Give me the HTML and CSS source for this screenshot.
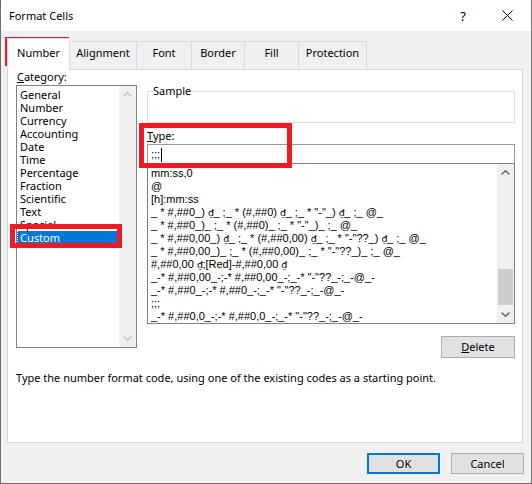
FILE: index.html
```html
<!DOCTYPE html>
<html>
<head>
<meta charset="utf-8">
<title>Format Cells</title>
<link rel="stylesheet" href="styles.css">
</head>
<body>
<div class="window">
  <div class="titlebar">
    <span class="title">Format Cells</span>
    <span class="help">?</span>
    <svg class="close" width="11" height="11" viewBox="0 0 11 11"><path d="M0.5 0.5L10.5 10.5M10.5 0.5L0.5 10.5" stroke="#000" stroke-width="1" fill="none"/></svg>
  </div>
  <div class="tabs">
    <div class="tab active t-number">Number</div>
    <div class="tab t-align">Alignment</div>
    <div class="tab t-font">Font</div>
    <div class="tab t-border">Border</div>
    <div class="tab t-fill">Fill</div>
    <div class="tab t-prot">Protection</div>
  </div>
  <div class="panel">
    <div class="content">
      <div class="leftcol">
        <div class="label cat-label"><u>C</u>ategory:</div>
        <div class="catlist">
          <ul class="cat-items">
            <li>General</li>
            <li>Number</li>
            <li>Currency</li>
            <li>Accounting</li>
            <li>Date</li>
            <li>Time</li>
            <li>Percentage</li>
            <li>Fraction</li>
            <li>Scientific</li>
            <li>Text</li>
            <li>Special</li>
            <li class="selected">Custom</li>
          </ul>
          <div class="vscroll disabled">
            <div class="sbtn"><svg width="9" height="5" viewBox="0 0 9 5"><path d="M0.5 4.5L4.5 0.7L8.5 4.5" stroke="currentColor" stroke-width="1.3" fill="none"/></svg></div>
            <div class="track"></div>
            <div class="sbtn"><svg width="9" height="5" viewBox="0 0 9 5"><path d="M0.5 0.5L4.5 4.3L8.5 0.5" stroke="currentColor" stroke-width="1.3" fill="none"/></svg></div>
          </div>
        </div>
      </div>
      <div class="rightcol">
        <div class="sample"><span class="legend">Sample</span></div>
        <div class="label type-label"><u>T</u>ype:</div>
        <div class="typeinput">;;;<span class="caret"></span></div>
        <div class="typelist">
          <ul class="codes">
            <li>mm:ss,0</li>
            <li>@</li>
            <li>[h]:mm:ss</li>
            <li>_ * #,##0_) <span class="dong">₫</span>_ ;_ * (#,##0) <span class="dong">₫</span>_ ;_ * "-"_) <span class="dong">₫</span>_ ;_ @_</li>
            <li>_ * #,##0_)_ ;_ * (#,##0)_ ;_ * "-"_)_ ;_ @_</li>
            <li>_ * #,##0,00_) <span class="dong">₫</span>_ ;_ * (#,##0,00) <span class="dong">₫</span>_ ;_ * "-"??_) <span class="dong">₫</span>_ ;_ @_</li>
            <li>_ * #,##0,00_)_ ;_ * (#,##0,00)_ ;_ * "-"??_)_ ;_ @_</li>
            <li>#,##0,00 <span class="dong">₫</span>;[Red]-#,##0,00 <span class="dong">₫</span></li>
            <li>_-* #,##0,00_-;-* #,##0,00_-;_-* "-"??_-;_-@_-</li>
            <li>_-* #,##0_-;-* #,##0_-;_-* "-"??_-;_-@_-</li>
            <li>;;;</li>
            <li>_-* #,##0,0_-;-* #,##0,0_-;_-* "-"??_-;_-@_-</li>
          </ul>
          <div class="vscroll">
            <div class="sbtn"><svg width="9" height="5" viewBox="0 0 9 5"><path d="M0.5 4.5L4.5 0.7L8.5 4.5" stroke="currentColor" stroke-width="1.3" fill="none"/></svg></div>
            <div class="track"><div class="thumb"></div></div>
            <div class="sbtn"><svg width="9" height="5" viewBox="0 0 9 5"><path d="M0.5 0.5L4.5 4.3L8.5 0.5" stroke="currentColor" stroke-width="1.3" fill="none"/></svg></div>
          </div>
        </div>
        <div class="delete-row"><button class="btn delete"><u>D</u>elete</button></div>
      </div>
    </div>
    <p class="desc">Type the number format code, using one of the existing codes as a starting point.</p>
  </div>
  <div class="footer">
    <button class="btn ok">OK</button>
    <button class="btn">Cancel</button>
  </div>
  <div class="mark mark-tab"></div>
  <div class="mark mark-type"></div>
  <div class="mark mark-custom"></div>
</div>
</body>
</html>
```
FILE: styles.css
```css
* { box-sizing: border-box; }
html, body { margin: 0; padding: 0; }
body {
  width: 532px;
  height: 484px;
  overflow: hidden;
  font-family: "Noto Sans", "Open Sans", sans-serif;
  font-size: 11px;
  color: #000;
}
.window {
  position: relative;
  width: 532px;
  height: 484px;
  background: #f0f0f0;
  border: 1px solid #6e6e6e;
  border-top: none;
  display: flex;
  flex-direction: column;
}
.titlebar {
  flex: none;
  height: 31px;
  background: #fff;
  display: flex;
  align-items: center;
  padding-left: 8px;
}
.title { flex: 1; font-size: 11px; }
.help { font-size: 13px; margin-right: 36px; }
.close { margin-right: 18px; }

.tabs {
  flex: none;
  display: flex;
  align-items: flex-end;
  height: 31px;
  margin: 7px 0 0 6px;
  position: relative;
  z-index: 1;
}
.tab {
  height: 28px;
  border: 1px solid #d9d9d9;
  border-bottom: none;
  border-right: none;
  background: #f0f0f0;
  display: flex;
  align-items: center;
  justify-content: center;
  padding-bottom: 6px;
}
.tab.t-prot { border-right: 1px solid #d9d9d9; }
.tab.active {
  height: 32px;
  margin-bottom: -1px;
  background: #fff;
  padding-bottom: 4px;
}
.t-number { width: 62px; }
.t-align { width: 67px; }
.t-font { width: 55px; }
.t-border { width: 53px; }
.t-fill { width: 54px; }
.t-prot { width: 69px; }

.panel {
  flex: none;
  margin: 0 8px 0 6px;
  height: 374px;
  background: #fff;
  border: 1px solid #d9d9d9;
  display: flex;
  flex-direction: column;
}
.content {
  display: flex;
  gap: 10px;
  padding-left: 8px;
}
.leftcol { width: 121px; display: flex; flex-direction: column; }
.label { line-height: 13px; }
.cat-label { margin-bottom: 2px; padding-left: 1px; }
.catlist {
  height: 263px;
  border: 1px solid #828282;
  display: flex;
}
ul { list-style: none; margin: 0; padding: 0; }
.cat-items {
  flex: 1;
  padding-top: 2px;
  margin-right: 2px;
}
.cat-items li {
  height: 13px;
  line-height: 13px;
  padding-left: 3px;
  white-space: nowrap;
}
.cat-items li.selected {
  background: #0078d7;
  color: #fff;
  border-left: 1px dotted #fff;
  padding-left: 2px;
}
.vscroll {
  width: 17px;
  flex: none;
  background: #f0f0f0;
  display: flex;
  flex-direction: column;
  color: #606060;
}
.vscroll.disabled { color: #c3c3c3; }
.sbtn {
  height: 17px;
  display: flex;
  align-items: center;
  justify-content: center;
}
.track { flex: 1; }
.thumb {
  margin: 88px 1px 0 1px;
  height: 36px;
  background: #cdcdcd;
}

.rightcol { width: 368px; display: flex; flex-direction: column; }
.sample {
  margin-top: 21px;
  height: 32px;
  border: 1px solid #dcdcdc;
  position: relative;
}
.legend {
  position: absolute;
  left: 5px;
  top: -8px;
  line-height: 14px;
  background: #fff;
  padding-right: 1px;
}
.type-label { margin-top: 6px; margin-bottom: 2px; }
.typeinput {
  height: 20px;
  border: 1px solid #9a9a9a;
  padding: 1px 0 0 3px;
  font-family: "Liberation Sans", Arial, sans-serif;
  font-size: 11px;
  line-height: 17px;
  display: flex;
  align-items: center;
}
.caret {
  display: inline-block;
  width: 1px;
  height: 14px;
  background: #000;
  margin-left: 1px;
}
.typelist {
  margin-top: -1px;
  height: 161px;
  border: 1px solid #828282;
  display: flex;
  overflow: hidden;
}
.codes {
  flex: 1;
  padding-top: 3px;
  overflow: hidden;
  font-family: "Liberation Sans", Arial, sans-serif;
  font-size: 11px;
}
.codes li {
  height: 13px;
  line-height: 13px;
  padding-left: 3px;
  white-space: nowrap;
}
.dong {
  font-family: "DejaVu Sans", sans-serif;
  font-size: 9.5px;
  letter-spacing: -0.5px;
}
.delete-row {
  display: flex;
  justify-content: flex-end;
  margin-top: 12px;
}
.btn {
  font-family: inherit;
  font-size: 11px;
  color: #000;
  background: #e1e1e1;
  border: 1px solid #adadad;
  width: 73px;
  height: 21px;
  padding: 0;
  line-height: 18px;
}
.delete { width: 74px; height: 22px; }
.btn.ok { border: 2px solid #0078d7; }
.desc {
  margin: 12px 0 0 8px;
  line-height: 15px;
}
.footer {
  flex: none;
  display: flex;
  justify-content: flex-end;
  gap: 11px;
  padding: 10px 7px 0 0;
}
.mark {
  position: absolute;
  border: 5px solid #ed1c24;
}
.mark-tab { left: 4px; top: 37px; width: 64px; height: 29px; border-width: 4px; }
.mark-type { left: 138px; top: 123px; width: 153px; height: 45px; }
.mark-custom { left: 9px; top: 224px; width: 112px; height: 24px; }
```
